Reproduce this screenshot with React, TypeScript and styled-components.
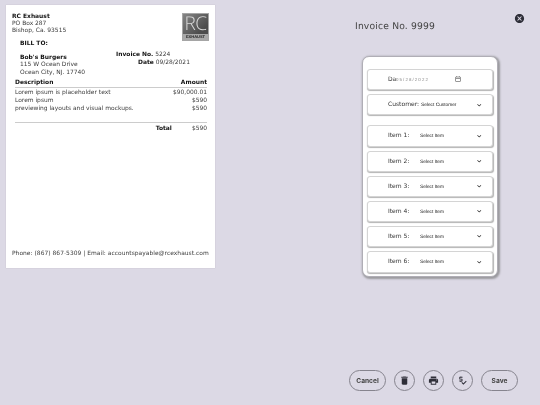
import React from "react";
import styled, { createGlobalStyle } from "styled-components";
import { MdCancel, MdDelete, MdPrint, MdPriceCheck, MdOutlineCalendarToday } from "react-icons/md";
import { FaChevronDown } from "react-icons/fa";

const GlobalStyle = createGlobalStyle`
  html, body { margin: 0; padding: 0; background: #dcd9e5; }
  body { font-family: "DejaVu Sans", Verdana, sans-serif; color: #333; text-rendering: geometricPrecision; }
`;

const Page = styled.div`
  position: relative;
  width: 540px;
  height: 405px;
  overflow: hidden;
  display: flex;
  background: #dcd9e5;
  will-change: transform;
`;

const Paper = styled.div`
  width: 209px;
  height: 263px;
  margin: 5px 0 0 6px;
  padding: 8px 6px 0 6px;
  box-sizing: border-box;
  background: #fff;
  box-shadow: 0 0 1px #b5b3bb;
  display: flex;
  flex-direction: column;
  font-size: 5.95px;
  line-height: 7.2px;
  color: #3c3c3c;
`;

const PaperHead = styled.div`
  display: flex;
  justify-content: space-between;
`;

const Strong = styled.div`
  font-weight: bold;
  color: #111;
`;

const Logo = styled.div`
  width: 27px;
  height: 28px;
  background: linear-gradient(135deg, #858585, #4c4c4c 70%);
  border: 1px solid #a5a5a5;
  box-sizing: border-box;
  color: #d8d8d8;
  display: flex;
  flex-direction: column;
  align-items: center;
  justify-content: space-between;
  font-family: "Open Sans", sans-serif;
  font-weight: 300;
  font-size: 19px;
  line-height: 18px;
  letter-spacing: -0.5px;
`;

const LogoSub = styled.div`
  width: 100%;
  background: #a8a8a8;
  color: #222;
  font-family: "Liberation Sans", sans-serif;
  font-size: 4px;
  font-weight: bold;
  line-height: 6px;
  text-align: center;
  letter-spacing: 0;
`;

const BillTo = styled.div`
  font-weight: bold;
  color: #111;
  padding-left: 8px;
  margin-top: -1.5px;
`;

const BillRow = styled.div`
  display: flex;
  margin-top: 4px;
  padding-left: 8px;
`;

const BillAddress = styled.div`
  width: 96px;
  padding-top: 3.5px;
`;

const InvoiceMeta = styled.div`
  flex: 1;
  display: flex;
  flex-direction: column;
  gap: 1.5px;
`;

const MetaLine = styled.div<{ $indent: number }>`
  padding-left: ${p => p.$indent}px;
  b { color: #111; }
`;

const Lines = styled.div`
  margin: 3px 2px 0 3px;
`;

const LineRow = styled.div`
  display: flex;
  justify-content: space-between;
  height: 8px;
`;

const LineHead = styled(LineRow)`
  font-weight: bold;
  color: #111;
  height: 7px;
  padding-bottom: 1px;
  border-bottom: 1px solid #ccc;
  margin-bottom: 1.5px;
`;

const TotalRow = styled.div`
  display: flex;
  justify-content: flex-end;
  margin-top: 9px;
  border-top: 1px solid #ccc;
  padding-top: 2px;
  b { color: #111; margin-right: 20px; }
`;

const PaperFoot = styled.div`
  margin-top: auto;
  margin-bottom: 11px;
  white-space: nowrap;
  letter-spacing: 0.03px;
`;

const Side = styled.div`
  flex: 1;
  display: flex;
  flex-direction: column;
`;

const Title = styled.div`
  margin: 20px 0 0 140px;
  font-size: 9.2px;
  line-height: 13px;
  color: #444;
  letter-spacing: 0.17px;
`;

const Close = styled.div`
  position: absolute;
  left: 514px;
  top: 13px;
  color: #2e2e38;
  font-size: 11px;
  line-height: 11px;
`;

const Card = styled.div`
  width: 136px;
  height: 221px;
  margin: 23px 0 0 147px;
  padding: 11.5px 4.5px 0 3.5px;
  box-sizing: border-box;
  background: #fff;
  border: 1px solid #b0aeb6;
  border-radius: 7px;
  box-shadow: 1px 1px 2px 1px #9a9a9e;
  display: flex;
  flex-direction: column;
`;

const Field = styled.div<{ $gap?: number }>`
  height: 21.2px;
  margin-bottom: ${p => p.$gap ?? 4}px;
  box-sizing: border-box;
  display: flex;
  align-items: baseline;
  padding: 6px 0 0 20.5px;
  background: #fff;
  border: 1px solid #d4d4d4;
  border-radius: 3px;
  box-shadow: 0.5px 1px 1px #b4b4b4;
  flex-shrink: 0;
`;

const Label = styled.span<{ $w: number }>`
  width: ${p => p.$w}px;
  flex-shrink: 0;
  font-size: 6px;
  color: #333;
  white-space: nowrap;
`;

const Value = styled.span`
  flex: 1;
  font-family: "Liberation Sans", sans-serif;
  font-size: 4.8px;
  color: #222;
  white-space: nowrap;
`;

const DateValue = styled(Value)`
  color: #888;
  letter-spacing: 1.1px;
  font-size: 4.4px;
`;

const FieldIcon = styled.span`
  width: 14.5px;
  display: flex;
  align-self: center;
  margin-top: -6px;
  color: #222;
  font-size: 4.5px;
`;

const DateIcon = styled(FieldIcon)`
  width: 37px;
  color: #333;
  font-size: 6px;
`;

const Footer = styled.div`
  margin: 93px 0 0 134px;
  display: flex;
  gap: 8px;
  align-items: center;
`;

const PillButton = styled.button`
  width: 37px;
  height: 21px;
  padding: 0;
  border: 1px solid #86848e;
  border-radius: 11px;
  background: transparent;
  font-family: "Inter", "Liberation Sans", sans-serif;
  font-size: 6.6px;
  font-weight: 700;
  color: #444;
`;

const RoundButton = styled.button`
  width: 21px;
  height: 21px;
  padding: 0;
  border: 1px solid #86848e;
  border-radius: 50%;
  background: transparent;
  display: flex;
  align-items: center;
  justify-content: center;
  font-size: 11px;
  color: #2e2e38;
`;

const items = [1, 2, 3, 4, 5, 6];

export default function App() {
  return (
    <Page>
      <GlobalStyle />
      <Paper>
        <PaperHead>
          <div>
            <Strong>RC Exhaust</Strong>
            <div>PO Box 287</div>
            <div>Bishop, Ca. 93515</div>
          </div>
          <Logo>
            RC
            <LogoSub>EXHAUST</LogoSub>
          </Logo>
        </PaperHead>
        <BillTo>BILL TO:</BillTo>
        <BillRow>
          <BillAddress>
            <Strong>Bob's Burgers</Strong>
            <div>115 W Ocean Drive</div>
            <div>Ocean City, NJ. 17740</div>
          </BillAddress>
          <InvoiceMeta>
            <MetaLine $indent={0}><b>Invoice No.</b> 5224</MetaLine>
            <MetaLine $indent={22}><b>Date</b> 09/28/2021</MetaLine>
          </InvoiceMeta>
        </BillRow>
        <Lines>
          <LineHead><span>Description</span><span>Amount</span></LineHead>
          <LineRow><span>Lorem ipsum is placeholder text</span><span>$90,000.01</span></LineRow>
          <LineRow><span>Lorem ipsum</span><span>$590</span></LineRow>
          <LineRow><span>previewing layouts and visual mockups.</span><span>$590</span></LineRow>
          <TotalRow><b>Total</b><span>$590</span></TotalRow>
        </Lines>
        <PaperFoot>Phone: (867) 867-5309 | Email: accountspayable@rcexhaust.com</PaperFoot>
      </Paper>
      <Side>
        <Title>Invoice No. 9999</Title>
        <Close><MdCancel /></Close>
        <Card>
          <Field $gap={4.5}>
            <Label $w={8}>Da</Label>
            <DateValue>05/28/2022</DateValue>
            <DateIcon><MdOutlineCalendarToday /></DateIcon>
          </Field>
          <Field $gap={10}>
            <Label $w={33}>Customer:</Label>
            <Value>Select Customer</Value>
            <FieldIcon><FaChevronDown /></FieldIcon>
          </Field>
          {items.map(n => (
            <Field key={n}>
              <Label $w={32}>Item {n}:</Label>
              <Value>Select Item</Value>
              <FieldIcon><FaChevronDown /></FieldIcon>
            </Field>
          ))}
        </Card>
        <Footer>
          <PillButton>Cancel</PillButton>
          <RoundButton><MdDelete /></RoundButton>
          <RoundButton><MdPrint /></RoundButton>
          <RoundButton><MdPriceCheck /></RoundButton>
          <PillButton>Save</PillButton>
        </Footer>
      </Side>
    </Page>
  );
}
